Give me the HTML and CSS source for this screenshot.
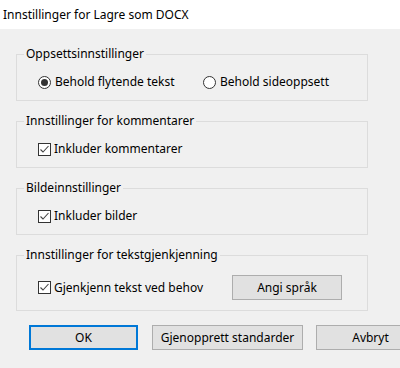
FILE: index.html
```html
<html>
<head>
  <meta charset="utf-8">
  <link rel="stylesheet" href="styles.css">
</head>
<body>
<div class="titlebar">Innstillinger for Lagre som DOCX</div>

<div class="dialog">
  <fieldset class="group">
    <legend>Oppsettsinnstillinger</legend>
    <div class="row">
      <label class="option opt-first"><span class="radio checked"></span>Behold flytende tekst</label>
      <label class="option"><span class="radio"></span>Behold sideoppsett</label>
    </div>
  </fieldset>

  <fieldset class="group">
    <legend>Innstillinger for kommentarer</legend>
    <div class="row">
      <label class="option"><span class="check"><svg width="11" height="11" viewBox="0 0 11 11"><polyline points="1.5,5.5 4,8 9.5,2" fill="none" stroke="#444" stroke-width="1.1"/></svg></span>Inkluder kommentarer</label>
    </div>
  </fieldset>

  <fieldset class="group">
    <legend>Bildeinnstillinger</legend>
    <div class="row">
      <label class="option"><span class="check"><svg width="11" height="11" viewBox="0 0 11 11"><polyline points="1.5,5.5 4,8 9.5,2" fill="none" stroke="#444" stroke-width="1.1"/></svg></span>Inkluder bilder</label>
    </div>
  </fieldset>

  <fieldset class="group group-ocr">
    <legend>Innstillinger for tekstgjenkjenning</legend>
    <div class="row row-ocr">
      <label class="option opt-ocr"><span class="check"><svg width="11" height="11" viewBox="0 0 11 11"><polyline points="1.5,5.5 4,8 9.5,2" fill="none" stroke="#444" stroke-width="1.1"/></svg></span>Gjenkjenn tekst ved behov</label>
      <button class="btn btn-lang">Angi språk</button>
    </div>
  </fieldset>
</div>

<div class="actions">
  <button class="btn btn-ok">OK</button>
  <button class="btn btn-reset">Gjenopprett standarder</button>
  <button class="btn btn-cancel">Avbryt</button>
</div>
</body>
</html>
```

FILE: styles.css
```css
html, body {
  margin: 0;
  padding: 0;
  width: 400px;
  height: 368px;
  overflow: hidden;
  background: #f0f0f0;
  font: normal 12px "Noto Sans", "Open Sans", sans-serif;
  color: #000;
}
.titlebar {
  height: 29px;
  line-height: 29px;
  background: #fff;
  padding-left: 3px;
  white-space: nowrap;
}
.dialog {
  padding-left: 16px;
  width: 352px;
}
.group {
  margin: 12px 0 0 0;
  padding: 0 0 8px 7px;
  border: 1px solid #dcdcdc;
  min-width: 0;
}
.group:first-child {
  margin-top: 17px;
}
.group legend {
  padding: 0 2px;
  line-height: 16px;
  height: 16px;
}
.row {
  display: flex;
  align-items: center;
  height: 20px;
  margin: 10px 0 0 14px;
}
.row-ocr {
  height: 25px;
  margin-top: 12px;
}
.group-ocr {
  padding-bottom: 10px;
}
.option {
  display: flex;
  align-items: center;
  line-height: 16px;
  white-space: nowrap;
}
.opt-first {
  width: 165px;
}
.opt-ocr {
  width: 194px;
}
.radio {
  box-sizing: border-box;
  width: 13px;
  height: 13px;
  border: 1px solid #333;
  border-radius: 50%;
  margin-right: 4px;
  display: flex;
  align-items: center;
  justify-content: center;
  background: #fff;
}
.radio.checked::after {
  content: "";
  width: 7px;
  height: 7px;
  border-radius: 50%;
  background: #333;
}
.check {
  box-sizing: border-box;
  width: 13px;
  height: 13px;
  border: 1px solid #333;
  margin-right: 3px;
  display: flex;
  background: #fff;
}
.btn {
  box-sizing: border-box;
  flex-shrink: 0;
  height: 25px;
  padding: 0;
  background: #e1e1e1;
  border: 1px solid #adadad;
  font: inherit;
  color: #000;
  white-space: nowrap;
}
.btn-lang {
  width: 110px;
}
.actions {
  display: flex;
  width: 500px;
  margin-top: 14px;
  padding-left: 29px;
}
.btn-ok {
  width: 109px;
  border: 2px solid #0078d7;
  margin-right: 14px;
}
.btn-reset {
  width: 151px;
  margin-right: 13px;
}
.btn-cancel {
  width: 109px;
}
```
